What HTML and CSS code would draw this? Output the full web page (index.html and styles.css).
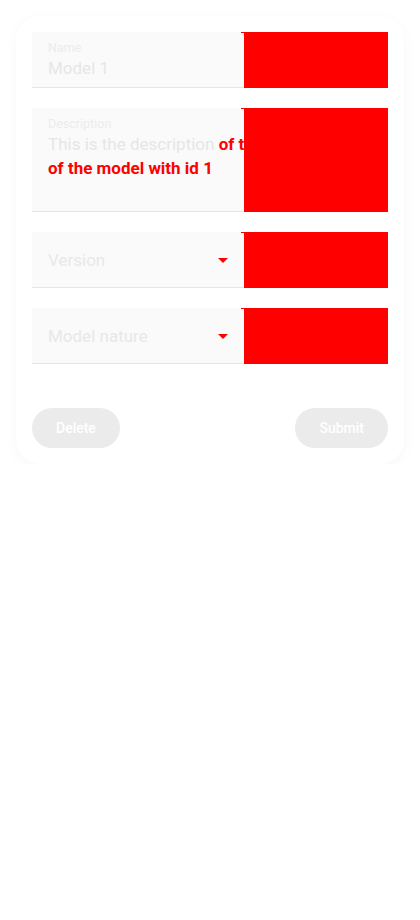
FILE: index.html
```html
<!DOCTYPE html>
<html>
<head>
<meta charset="utf-8">
<link rel="stylesheet" href="styles.css">
</head>
<body>
<div class="card">
  <div class="row">
    <div class="field">
      <div class="label">Name</div>
      <div class="value">Model 1</div>
    </div>
    <div class="mask"></div>
  </div>
  <div class="row">
    <div class="field field-tall">
      <div class="label">Description</div>
      <div class="value nowrap">This is the description <span class="red">of the model</span></div>
      <div class="value"><span class="red">of the model with id 1</span></div>
    </div>
    <div class="mask"></div>
  </div>
  <div class="row">
    <div class="field select">
      <div class="placeholder">Version</div>
      <span class="caret"></span>
    </div>
    <div class="mask"></div>
  </div>
  <div class="row">
    <div class="field select">
      <div class="placeholder">Model nature</div>
      <span class="caret"></span>
    </div>
    <div class="mask"></div>
  </div>
  <div class="actions">
    <button class="btn">Delete</button>
    <button class="btn">Submit</button>
  </div>
</div>
</body>
</html>
```

FILE: styles.css
```css
html, body {
  margin: 0;
  padding: 0;
  background: #ffffff;
  font-family: Roboto, "Liberation Sans", sans-serif;
}

.card {
  margin: 16px 16px 0 16px;
  padding: 16px 16px 16px 16px;
  background: #ffffff;
  border-radius: 24px;
  box-shadow: 0 3px 14px rgba(0, 0, 0, 0.035);
  display: flex;
  flex-direction: column;
  gap: 20px;
}

.row {
  display: flex;
  height: 56px;
}

.row:nth-child(2) {
  height: 104px;
}

.field {
  flex: 1;
  box-sizing: border-box;
  background: #fafafa;
  border-bottom: 1px solid #e6e6e6;
  padding: 8px 16px 0 16px;
  overflow: visible;
  min-width: 0;
}

.label {
  font-size: 12.5px;
  line-height: 16px;
  color: #ececec;
}

.value {
  font-size: 17px;
  line-height: 24px;
  color: #e6e6e6;
}

.nowrap {
  white-space: nowrap;
}

.red {
  color: #ff0000;
  font-weight: 700;
}

.select {
  display: flex;
  align-items: center;
  padding-top: 1px;
}

.placeholder {
  flex: 1;
  font-size: 17px;
  color: #e8e8e8;
}

.caret {
  width: 0;
  height: 0;
  border-left: 5px solid transparent;
  border-right: 5px solid transparent;
  border-top: 5px solid #ff0000;
}

.mask {
  position: relative;
  z-index: 1;
  width: 144px;
  flex-shrink: 0;
  background: #ff0000;
  box-shadow: 0 -1px 0 #ff0000;
  margin-top: 1px;
}

.mask::before {
  content: "";
  position: absolute;
  top: -1px;
  left: -3px;
  width: 3px;
  height: 1px;
  background: #ff0000;
}

.actions {
  display: flex;
  justify-content: space-between;
  margin-top: 24px;
}

.btn {
  height: 40px;
  padding: 0 24px;
  border: none;
  border-radius: 20px;
  background: #ebebeb;
  color: #ffffff;
  font-family: Roboto, "Liberation Sans", sans-serif;
  font-size: 14px;
  font-weight: 500;
}
```
